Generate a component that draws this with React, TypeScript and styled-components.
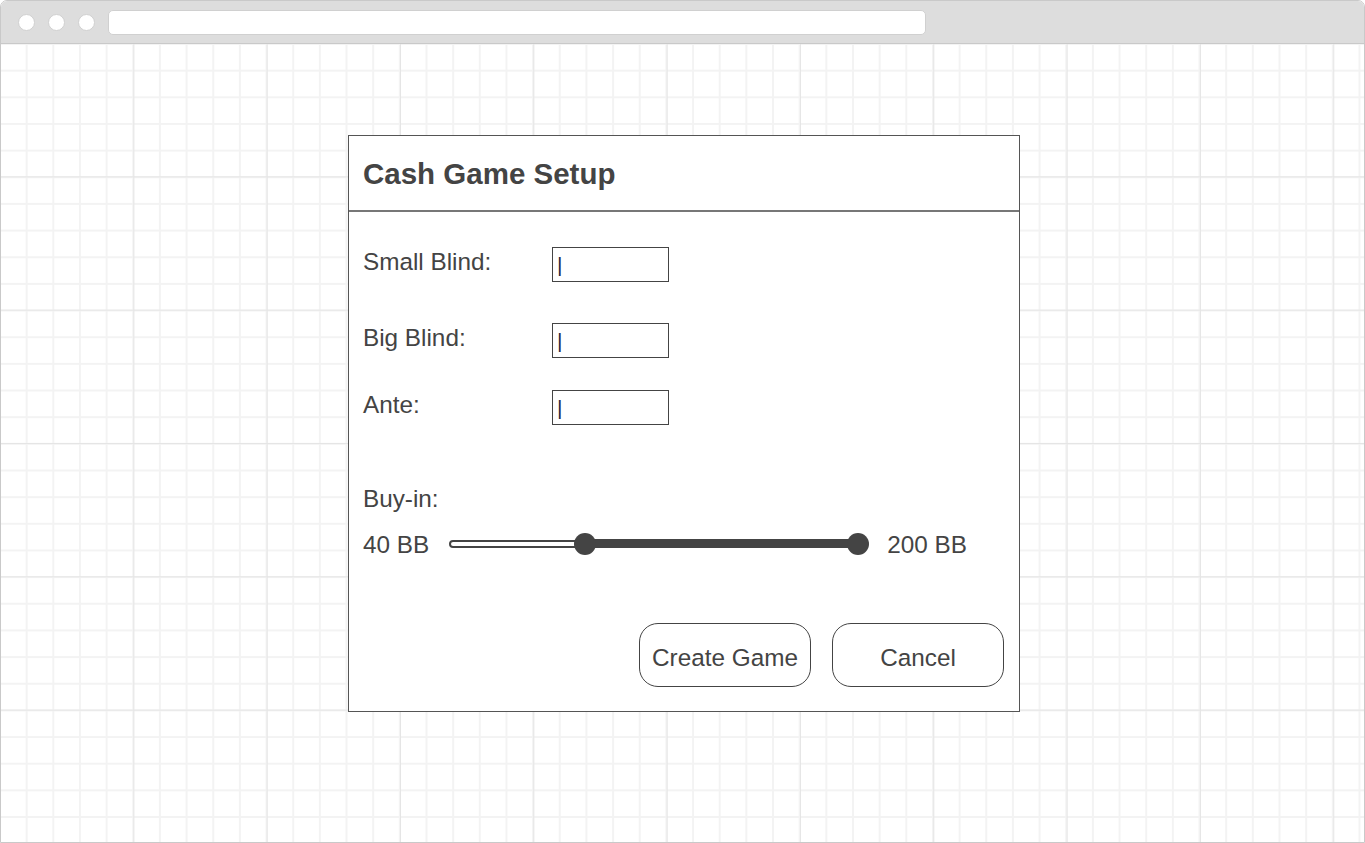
import styled, { createGlobalStyle } from "styled-components";

const GlobalStyle = createGlobalStyle`
  html, body {
    margin: 0;
    padding: 0;
    background: #fff;
  }
  * {
    box-sizing: border-box;
  }
  body {
    font-family: "Liberation Sans", Arial, sans-serif;
    color: #444;
  }
`;

const Frame = styled.div`
  width: 1365px;
  height: 843px;
  border: 1px solid #c9c9c9;
  border-radius: 7px 7px 0 0;
  overflow: hidden;
  display: flex;
  flex-direction: column;
`;

const TopBar = styled.div`
  height: 43px;
  flex-shrink: 0;
  background: #dddddd;
  border-bottom: 1px solid #c9c9c9;
  display: flex;
  align-items: center;
  padding-left: 17px;
  gap: 13px;
`;

const Dot = styled.span`
  width: 17px;
  height: 17px;
  border-radius: 50%;
  background: #fff;
  border: 1px solid #d0d0d0;
`;

const AddressBar = styled.div`
  width: 818px;
  height: 25px;
  margin-left: 0;
  background: #fff;
  border: 1px solid #d0d0d0;
  border-radius: 5px;
`;

const Canvas = styled.div`
  flex: 1;
  background-color: #fff;
  background-image:
    linear-gradient(to right, #e5e5e5 1px, transparent 1px),
    linear-gradient(to bottom, #e5e5e5 1px, transparent 1px),
    linear-gradient(to right, #f3f3f3 2px, transparent 2px),
    linear-gradient(to bottom, #f3f3f3 2px, transparent 2px);
  background-size: 133.333px 133.333px, 133.333px 133.333px,
    26.667px 26.667px, 26.667px 26.667px;
  background-position: -1px -1px, -1px -1px, -2px -1px, -2px -1px;
  padding: 91px 0 0 347px;
`;

const Dialog = styled.div`
  width: 672px;
  height: 577px;
  background: #fff;
  border: 1px solid #555;
  display: flex;
  flex-direction: column;
`;

const Header = styled.div`
  height: 76px;
  border-bottom: 2px solid #777;
  display: flex;
  align-items: center;
  padding: 2px 0 0 14px;
`;

const Title = styled.h1`
  margin: 0;
  font-size: 29.5px;
  font-weight: 700;
  color: #444;
`;

const Body = styled.div`
  flex: 1;
  display: flex;
  flex-direction: column;
  padding: 35px 15px 24px 14px;
`;

const FieldRow = styled.div<{ $gap: number }>`
  display: flex;
  align-items: flex-start;
  margin-bottom: ${(p) => p.$gap}px;
`;

const Label = styled.label`
  width: 189px;
  padding-top: 1px;
  font-size: 24.3px;
  color: #444;
`;

const InputBox = styled.div`
  width: 117px;
  height: 35px;
  border: 1px solid #444;
  background: #fff;
  display: flex;
  align-items: center;
  padding-left: 4px;
`;

const Caret = styled.span`
  font-size: 21px;
  line-height: 1;
  color: #1d2a40;
`;

const SectionLabel = styled.div`
  font-size: 24.3px;
  color: #444;
  margin-bottom: 18px;
`;

const SliderRow = styled.div`
  display: flex;
  align-items: center;
  height: 28px;
  font-size: 24.3px;
  color: #444;
`;

const RangeLabel = styled.span<{ $ml: number }>`
  margin-left: ${(p) => p.$ml}px;
`;

const Slider = styled.div`
  position: relative;
  width: 420px;
  height: 24px;
  margin-left: 20px;
  margin-top: -3px;
`;

const Track = styled.div`
  position: absolute;
  left: 0;
  top: 8px;
  width: 409px;
  height: 8px;
  border: 2px solid #444;
  border-radius: 4px;
  background: #fff;
`;

const Fill = styled.div`
  position: absolute;
  top: 7.5px;
  height: 9px;
  background: #444;
`;

const Thumb = styled.div`
  position: absolute;
  top: 1px;
  width: 22px;
  height: 22px;
  margin-left: -11px;
  border-radius: 50%;
  background: #444;
`;

const Actions = styled.div`
  margin-top: auto;
  display: flex;
  justify-content: flex-end;
  gap: 21px;
`;

const Button = styled.button`
  width: 172px;
  height: 64px;
  border: 1px solid #444;
  border-radius: 19px;
  background: #fff;
  font-family: "Liberation Sans", Arial, sans-serif;
  font-size: 24.3px;
  color: #444;
  padding: 5px 0 0;
  cursor: pointer;
`;

const fields = [
  { label: "Small Blind:", gap: 41 },
  { label: "Big Blind:", gap: 32 },
  { label: "Ante:", gap: 60 },
];

const TRACK = 409;

export default function App() {
  const min = 40;
  const max = 200;
  const low = 93;
  const high = 200;
  const lowX = ((low - min) / (max - min)) * TRACK;
  const highX = ((high - min) / (max - min)) * TRACK;

  return (
    <>
      <GlobalStyle />
      <Frame>
        <TopBar>
          <Dot />
          <Dot />
          <Dot />
          <AddressBar />
        </TopBar>
        <Canvas>
          <Dialog>
            <Header>
              <Title>Cash Game Setup</Title>
            </Header>
            <Body>
              {fields.map((f) => (
                <FieldRow key={f.label} $gap={f.gap}>
                  <Label>{f.label}</Label>
                  <InputBox>
                    <Caret>|</Caret>
                  </InputBox>
                </FieldRow>
              ))}
              <SectionLabel>Buy-in:</SectionLabel>
              <SliderRow>
                <span>40 BB</span>
                <Slider>
                  <Track />
                  <Fill style={{ left: lowX, width: highX - lowX }} />
                  <Thumb style={{ left: lowX }} />
                  <Thumb style={{ left: highX }} />
                </Slider>
                <RangeLabel $ml={18}>200 BB</RangeLabel>
              </SliderRow>
              <Actions>
                <Button>Create Game</Button>
                <Button>Cancel</Button>
              </Actions>
            </Body>
          </Dialog>
        </Canvas>
      </Frame>
    </>
  );
}
